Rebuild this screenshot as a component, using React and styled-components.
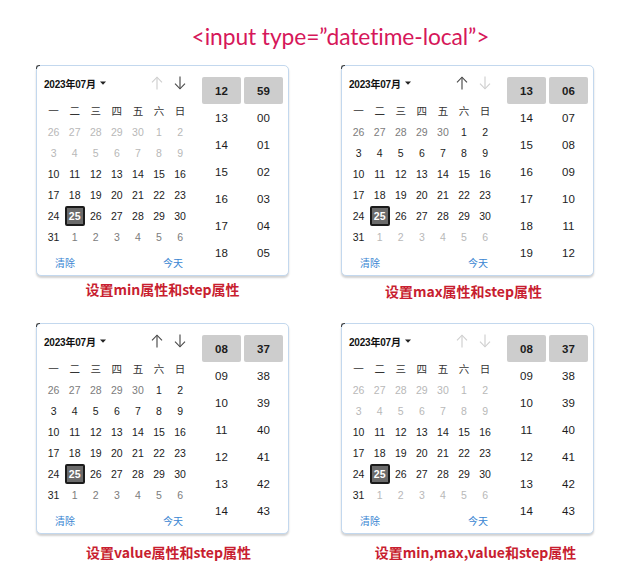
import React from "react";
import styled, { createGlobalStyle } from "styled-components";

const Global = createGlobalStyle`
  html, body { margin: 0; padding: 0; background: #ffffff; }
  body { font-family: "Liberation Sans", Arial, sans-serif; }
  * { box-sizing: border-box; }
`;

const Page = styled.div`
  width: 630px;
  height: 586px;
  padding-top: 22px;
  background: #fff;
`;

const Title = styled.h1`
  margin: 0;
  height: 28px;
  line-height: 28px;
  padding-left: 51px;
  text-align: center;
  font-family: Lato, "Open Sans", sans-serif;
  font-weight: 400;
  font-size: 22.8px;
  color: #d6175a;
  letter-spacing: -0.1px;
`;

const Grid = styled.div`
  margin-top: 15px;
  padding-left: 36px;
  display: grid;
  grid-template-columns: 253px 253px;
  column-gap: 52px;
  row-gap: 22px;
`;

const Cell = styled.div`
  display: flex;
  flex-direction: column;
`;

const Card = styled.div`
  width: 253px;
  height: 211px;
  border: 1px solid #c3d8ee;
  border-radius: 5px;
  box-shadow: 0 2px 2px rgba(0, 0, 0, 0.18);
  background: #fff;
  padding: 7px 5px 0 6px;
  display: flex;
  gap: 11px;
  position: relative;
  &::before {
    content: "";
    position: absolute;
    left: -1px;
    top: -1px;
    width: 3px;
    height: 3px;
    border-left: 1px solid #444;
    border-top: 1px solid #444;
    border-top-left-radius: 3px;
  }
`;

const CalendarSide = styled.div`
  width: 148px;
  display: flex;
  flex-direction: column;
`;

const Header = styled.div`
  height: 20px;
  display: flex;
  align-items: center;
  justify-content: space-between;
`;

const MonthLabel = styled.div`
  display: flex;
  align-items: center;
  gap: 4px;
  padding-left: 1px;
  font-family: "Liberation Sans", "Noto Sans CJK SC", sans-serif;
  font-weight: 700;
  font-size: 10px;
  color: #111;
  letter-spacing: -0.2px;
`;

const Arrows = styled.div`
  display: flex;
  gap: 1px;
`;

const ArrowBtn = styled.div`
  width: 22px;
  height: 20px;
  display: flex;
  align-items: center;
  justify-content: center;
  color: ${(p) => (p.$disabled ? "#cfcfcf" : "#4a4a4a")};
`;

const Days = styled.div`
  margin-top: 7px;
  display: grid;
  grid-template-columns: repeat(7, 21.1px);
  grid-auto-rows: 21px;
`;

const Weekday = styled.div`
  display: flex;
  align-items: center;
  justify-content: center;
  font-family: "Noto Sans CJK SC", sans-serif;
  font-size: 10.5px;
  color: #333;
`;

const dayColors = {
  normal: "#1c1c1c",
  other: "#7c7c7c",
  disabled: "#b8b8b8",
};

const Day = styled.div`
  display: flex;
  align-items: center;
  justify-content: center;
`;

const DayNum = styled.span`
  display: flex;
  align-items: center;
  justify-content: center;
  width: 20px;
  height: 20px;
  font-family: "Liberation Sans", Arial, sans-serif;
  font-size: 10.5px;
  color: ${(p) => (p.$selected ? "#fff" : dayColors[p.$state])};
  font-weight: ${(p) => (p.$selected ? 700 : 400)};
  background: ${(p) => (p.$selected ? "#6b6b6b" : "transparent")};
  border: 2px solid ${(p) => (p.$selected ? "#1b1b1b" : "transparent")};
  border-radius: 2px;
`;

const Footer = styled.div`
  margin-top: 5px;
  height: 20px;
  display: flex;
  align-items: center;
  justify-content: space-between;
  padding: 0 8px 0 12px;
  font-family: "Noto Sans CJK SC", sans-serif;
  font-size: 10px;
  color: #3a86d2;
`;

const TimeSide = styled.div`
  margin-top: 4px;
  display: flex;
  gap: 3px;
`;

const TimeCol = styled.div`
  width: 39px;
  display: flex;
  flex-direction: column;
`;

const TimeItem = styled.div`
  height: 27px;
  display: flex;
  align-items: center;
  justify-content: center;
  font-family: "Liberation Sans", Arial, sans-serif;
  font-size: 11.5px;
  color: #1c1c1c;
  font-weight: ${(p) => (p.$selected ? 700 : 400)};
  background: ${(p) => (p.$selected ? "#cdcdcd" : "transparent")};
  border-radius: 2px;
`;

const Caption = styled.div`
  margin-top: ${(p) => p.$gap}px;
  height: 20px;
  line-height: 20px;
  text-align: center;
  padding-left: ${(p) => Math.max(0, p.$shift * 2)}px;
  padding-right: ${(p) => Math.max(0, -p.$shift * 2)}px;
  font-family: "Noto Sans CJK SC", sans-serif;
  font-weight: 700;
  font-size: 14px;
  color: #c81e30;
  white-space: nowrap;
`;

const Caret = () => (
  <svg width="6" height="4" viewBox="0 0 6 4">
    <path d="M0 0.5 L6 0.5 L3 3.8 Z" fill="#222" />
  </svg>
);

const ArrowIcon = ({ dir }) => (
  <svg width="12" height="14" viewBox="0 0 12 14" fill="none" stroke="currentColor" strokeWidth="1.15">
    {dir === "up" ? (
      <>
        <path d="M6 1.2 V13.5" />
        <path d="M1 6.3 L6 1.2 L11 6.3" />
      </>
    ) : (
      <>
        <path d="M6 0.5 V12.8" />
        <path d="M1 7.7 L6 12.8 L11 7.7" />
      </>
    )}
  </svg>
);

const WEEK = ["一", "二", "三", "四", "五", "六", "日"];

function buildDays(kind) {
  const days = [];
  [26, 27, 28, 29, 30].forEach((d) => days.push({ d, state: kind.prev }));
  for (let d = 1; d <= 31; d++) {
    const state = kind.minCut && d < 10 ? "disabled" : "normal";
    days.push({ d, state, selected: d === 25 });
  }
  [1, 2, 3, 4, 5, 6].forEach((d) => days.push({ d, state: kind.next }));
  return days;
}

const pad = (n) => String(n).padStart(2, "0");
const range = (start, count, mod) =>
  Array.from({ length: count }, (_, i) => pad((start + i) % mod));

const PANELS = [
  {
    kind: { prev: "disabled", next: "other", minCut: true },
    upDisabled: true,
    downDisabled: false,
    hours: range(12, 7, 24),
    mins: range(59, 7, 60),
    caption: "设置min属性和step属性",
    gap: 3,
    shift: 0,
  },
  {
    kind: { prev: "other", next: "disabled", minCut: false },
    upDisabled: false,
    downDisabled: true,
    hours: range(13, 7, 24),
    mins: range(6, 7, 60),
    caption: "设置max属性和step属性",
    gap: 5,
    shift: -4,
  },
  {
    kind: { prev: "other", next: "other", minCut: false },
    upDisabled: false,
    downDisabled: false,
    hours: range(8, 7, 24),
    mins: range(37, 7, 60),
    caption: "设置value属性和step属性",
    gap: 8,
    shift: 6,
  },
  {
    kind: { prev: "disabled", next: "disabled", minCut: true },
    upDisabled: true,
    downDisabled: true,
    hours: range(8, 7, 24),
    mins: range(37, 7, 60),
    caption: "设置min,max,value和step属性",
    gap: 8,
    shift: 8,
  },
];

function Picker({ panel }) {
  const days = buildDays(panel.kind);
  return (
    <Cell>
      <Card>
        <CalendarSide>
          <Header>
            <MonthLabel>
              2023年07月
              <Caret />
            </MonthLabel>
            <Arrows>
              <ArrowBtn $disabled={panel.upDisabled}>
                <ArrowIcon dir="up" />
              </ArrowBtn>
              <ArrowBtn $disabled={panel.downDisabled}>
                <ArrowIcon dir="down" />
              </ArrowBtn>
            </Arrows>
          </Header>
          <Days>
            {WEEK.map((w) => (
              <Weekday key={w}>{w}</Weekday>
            ))}
            {days.map((x, i) => (
              <Day key={i}>
                <DayNum $state={x.state} $selected={x.selected}>
                  {x.d}
                </DayNum>
              </Day>
            ))}
          </Days>
          <Footer>
            <span>清除</span>
            <span>今天</span>
          </Footer>
        </CalendarSide>
        <TimeSide>
          <TimeCol>
            {panel.hours.map((h, i) => (
              <TimeItem key={h} $selected={i === 0}>
                {h}
              </TimeItem>
            ))}
          </TimeCol>
          <TimeCol>
            {panel.mins.map((m, i) => (
              <TimeItem key={m} $selected={i === 0}>
                {m}
              </TimeItem>
            ))}
          </TimeCol>
        </TimeSide>
      </Card>
      <Caption $gap={panel.gap} $shift={panel.shift}>
        {panel.caption}
      </Caption>
    </Cell>
  );
}

export default function App() {
  return (
    <Page>
      <Global />
      <Title>{'<input type=”datetime-local”>'}</Title>
      <Grid>
        {PANELS.map((p, i) => (
          <Picker key={i} panel={p} />
        ))}
      </Grid>
    </Page>
  );
}
